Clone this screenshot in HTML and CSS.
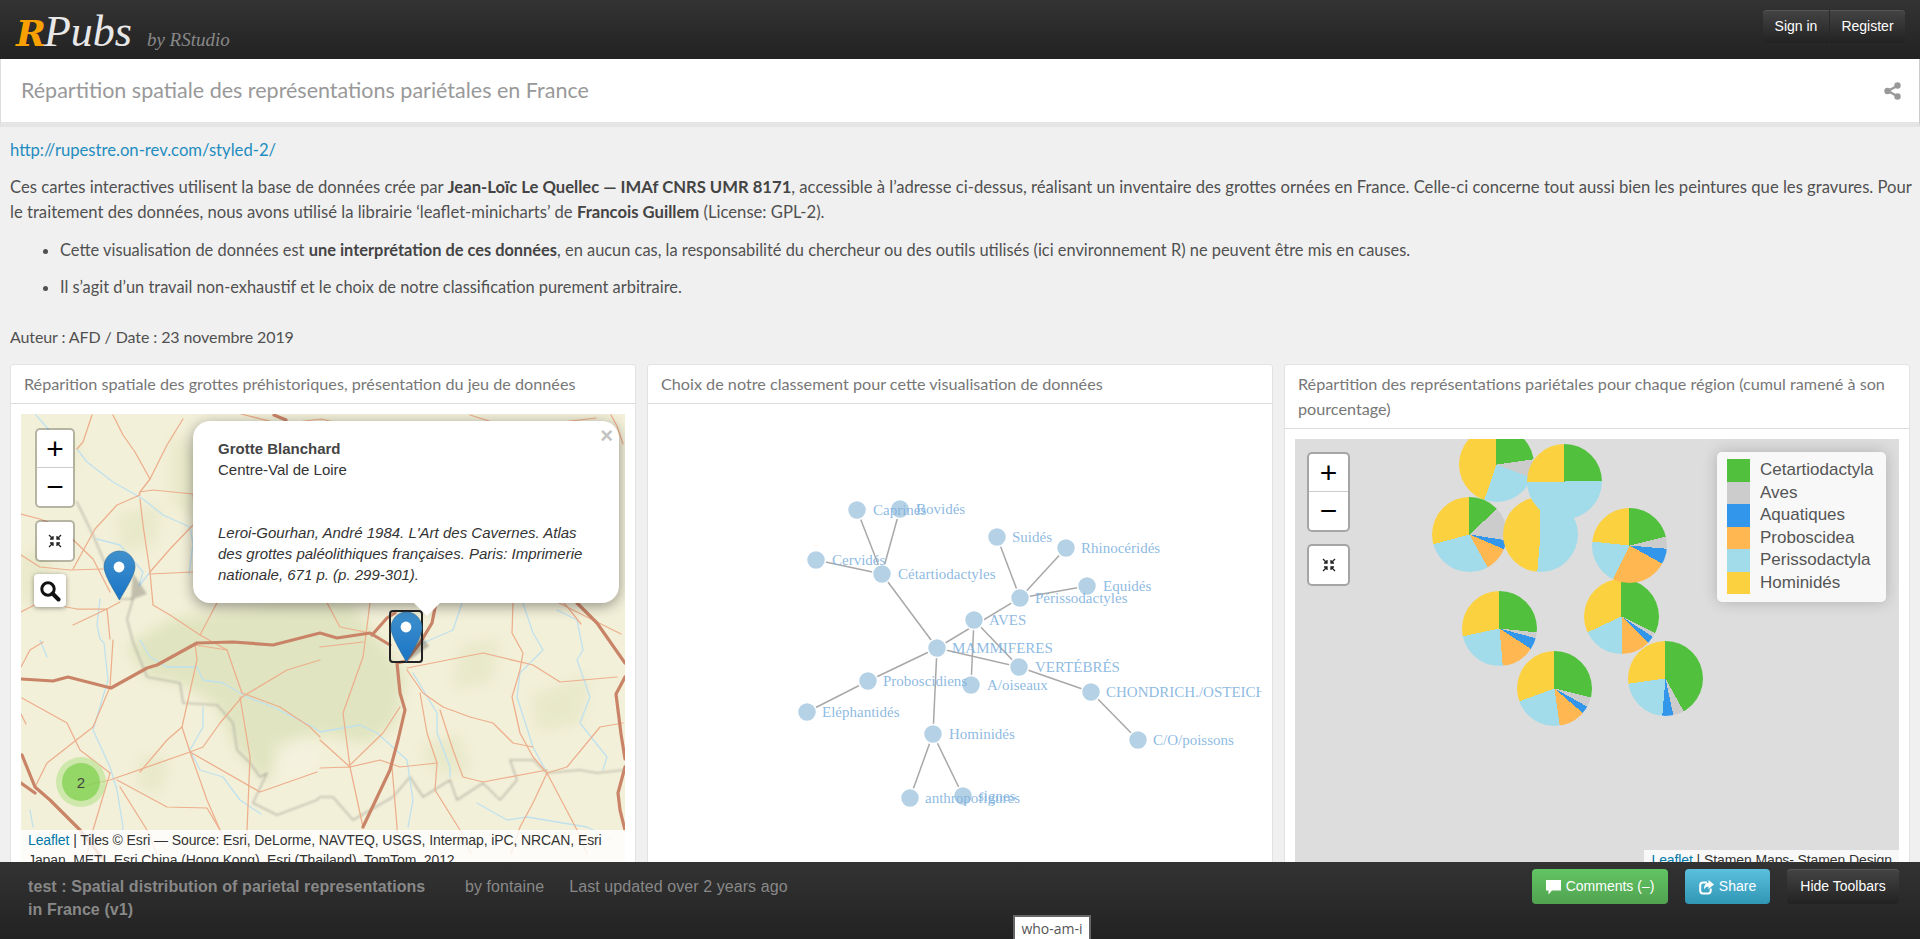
FILE: index.html
```html
<!DOCTYPE html>
<html lang="fr">

<head>
  <meta charset="UTF-8" />
  <title>RPubs - Répartition spatiale des représentations pariétales en France</title>
  <link rel="stylesheet" href="styles.css">
</head>

<body>
  <div class="topbar">
    <div class="logo"><span class="logo-r">R</span><span class="logo-pubs">Pubs</span><span class="logo-by">by RStudio</span></div>
    <div class="btn-group">
      <a class="btn btn-dark">Sign in</a>
      <a class="btn btn-dark">Register</a>
    </div>
  </div>

  <div class="titlebar">
    <h1>Répartition spatiale des représentations pariétales en France</h1>
    <svg class="share-alt" width="17" height="18" viewBox="0 0 17 18">
      <path d="M13 4 L4 9 L13 14" fill="none" stroke="#999" stroke-width="2.4" />
      <circle cx="13.5" cy="3.5" r="3.2" fill="#999" />
      <circle cx="3.5" cy="9" r="3.2" fill="#999" />
      <circle cx="13.5" cy="14.5" r="3.2" fill="#999" />
    </svg>
  </div>

  <div class="content">
    <p><a href="#">http://rupestre.on-rev.com/styled-2/</a></p>
    <p>Ces cartes interactives utilisent la base de données crée par <strong>Jean-Loïc Le Quellec — IMAf CNRS UMR 8171</strong>, accessible à l’adresse ci-dessus, réalisant un inventaire des grottes ornées en France. Celle-ci concerne tout aussi bien les peintures que les gravures. Pour le traitement des données, nous avons utilisé la librairie ‘leaflet-minicharts’ de <strong>Francois Guillem</strong> (License: GPL-2).</p>
    <ul>
      <li>Cette visualisation de données est <strong>une interprétation de ces données</strong>, en aucun cas, la responsabilité du chercheur ou des outils utilisés (ici environnement R) ne peuvent être mis en causes.</li>
      <li>Il s’agit d’un travail non-exhaustif et le choix de notre classification purement arbitraire.</li>
    </ul>
    <p class="auteur">Auteur : AFD / Date : 23 novembre 2019</p>

    <div class="cards">
      <div class="card">
        <div class="card-title">Réparition spatiale des grottes préhistoriques, présentation du jeu de données</div>
        <div class="card-body">
          <div class="map">
            <svg class="tiles" viewBox="0 0 604 456" preserveAspectRatio="xMinYMin slice">
              <defs>
                <filter id="soft"><feGaussianBlur stdDeviation="7" /></filter>
                <filter id="soft2"><feGaussianBlur stdDeviation="1" /></filter>
                <linearGradient id="pin" x1="0" y1="0" x2="0" y2="1">
                  <stop offset="0" stop-color="#3f90cc" />
                  <stop offset="1" stop-color="#1a74c6" />
                </linearGradient>
              </defs>
              <rect width="604" height="456" fill="#f3f0d9" />
              <g fill="#e0e4c0" filter="url(#soft)">
                <path d="M105 232 L150 205 L250 190 L330 190 L385 260 L375 310 L345 330 L300 320 L262 335 L245 370 L216 336 L196 291 L159 269 L126 263 Z" />
              </g>
              <g fill="#e4e6c4" fill-opacity=".7" filter="url(#soft)">
                <path d="M30 20 L60 30 L50 60 L25 50 Z" />
                <path d="M95 100 L140 90 L135 130 L100 140 Z" />
                <path d="M150 20 L190 40 L180 110 L150 90 Z" />
                <path d="M440 230 L480 225 L470 270 L430 275 Z" />
                <path d="M510 280 L570 260 L560 310 L515 320 Z" />
                <path d="M120 340 L150 345 L140 380 L115 375 Z" />
                <path d="M400 330 L440 320 L450 360 L410 360 Z" />
                <path d="M0 140 L30 130 L30 190 L0 190 Z" />
              </g>
              <g fill="#f6f3e4" fill-opacity=".5" filter="url(#soft)">
                <path d="M250 330 L290 320 L300 350 L260 370 Z" />
              </g>
              <g fill="none" stroke-linejoin="round" stroke-linecap="round">
                <g stroke="#a9a99c" stroke-width="1.7" opacity=".7" filter="url(#soft2)">
                  <path d="M56 88 L72 121 L99 185 L112 185 L106 205 L112 228 L126 263 L159 269 L162 289 L196 291 L212 309 L216 336 L229 349 L239 363 L246 359 L232 389 L256 401 L296 386 L299 383 L312 383 L332 406 L372 383 L389 363 L402 383 L429 366 L436 386 L462 369 L479 386 L496 366 L489 346 L512 346 L526 359 L559 356 L576 359 L602 356" />
                </g>
                <g stroke="#bfe1ee" stroke-width="1.3">
                  <path d="M56 35 L66 48 L92 68 L122 85 L142 101 L169 113 L172 130 L168 160" />
                  <path d="M76 125 L99 131 L122 158 L118 172 L129 158" />
                  <path d="M79 185 L76 211 L79 225 L83 229 L87 266 L72 316 L89 353 L96 376 L102 413 L98 430" />
                  <path d="M119 226 L129 243 L146 253 L176 253 L182 266 L202 269 L226 283 L252 293 L292 313 L299 318 L339 311 L356 319 L386 346 L392 386 L387 413" />
                  <path d="M182 293 L182 313 L169 336 L179 356 L202 363 L219 386 L240 400" />
                  <path d="M19 226 L26 243" />
                  <path d="M9 396 L12 413" />
                  <path d="M502 189 L512 219 L522 236 L499 259 L496 283 L512 333 L526 359" />
                  <path d="M536 196 L556 206 L562 236 L556 246 L569 283 L559 309 L586 343 L582 356" />
                  <path d="M441 189 L432 216 L402 229" />
                  <path d="M392 259 L416 299 L416 319 L429 353 L429 363" />
                  <path d="M456 389 L486 406 L506 403 L566 413 L590 425" />
                  <path d="M15 1 L40 30" />
                </g>
                <g stroke="#edae8c" stroke-width="1.25">
                  <path d="M71 1 L62 28 L56 35" />
                  <path d="M92 1 L102 21 L114 38 L129 65 L119 78 L118 81" />
                  <path d="M162 5 L146 31 L129 65" />
                  <path d="M119 78 L132 76 L172 80" />
                  <path d="M119 81 L96 91 L74 115 L52 155" />
                  <path d="M0 100 L19 105 L39 113 L72 145 L89 178" />
                  <path d="M119 85 L122 111 L129 158 L132 191 L149 201 L179 221 L206 236" />
                  <path d="M172 111 L149 135 L129 158" />
                  <path d="M129 160 L172 158" />
                  <path d="M0 141 L19 153 L49 156 L82 155" />
                  <path d="M0 198 L19 188 L56 195 L86 195 L99 188" />
                  <path d="M52 211 L86 195 L89 225" />
                  <path d="M386 254 L462 239 L512 251 L539 268 L596 263" />
                  <path d="M492 189 L491 219 L502 239 L499 256 L491 283 L499 319 L512 343 L526 359" />
                  <path d="M386 256 L402 279 L422 293 L449 303 L472 309 L492 329 L512 333" />
                  <path d="M399 279 L406 319 L416 349 L414 376 L439 416 L450 440" />
                  <path d="M419 296 L432 336 L442 363 L462 368 L526 356" />
                  <path d="M526 359 L556 416 L566 440" />
                  <path d="M526 359 L546 353 L579 313 L602 309" />
                  <path d="M299 326 L329 353 L359 346 L379 353 L416 349" />
                  <path d="M299 354 L329 353 L342 413" />
                  <path d="M329 353 L322 299 L342 243 L349 189" />
                  <path d="M329 351 L362 319 L379 293" />
                  <path d="M299 233 L342 228" />
                  <path d="M306 189 L319 213 L349 219" />
                  <path d="M371 353 L376 413 L376 440" />
                  <path d="M526 359 L512 389 L499 413 L490 440" />
                  <path d="M1 284 L46 309 L59 336 L89 359" />
                  <path d="M92 226 L89 273 L72 313 L26 349 L14 373" />
                  <path d="M0 253 L9 236 L22 228" />
                  <path d="M57 373 L89 366 L169 338 L182 333 L199 309 L221 283 L266 256 L299 246" />
                  <path d="M119 358 L146 326 L161 313 L176 246 L174 229" />
                  <path d="M161 313 L169 338 L186 386 L199 416 L210 440" />
                  <path d="M169 338 L239 378 L296 358" />
                  <path d="M219 283 L229 343 L226 416 L228 440" />
                  <path d="M174 231 L206 236 L221 279 L259 293 L289 313 L299 323" />
                  <path d="M89 359 L72 416 L66 440" />
                  <path d="M96 366 L146 393 L186 394 L199 416" />
                  <path d="M99 373 L126 416 L136 440" />
                  <path d="M172 80 L176 130" />
                  <path d="M179 221 L206 170 L230 120" />
                  <path d="M440 40 L450 100" />
                  <path d="M530 185 L600 220" />
                  <path d="M540 185 L560 210" />
                  <path d="M0 300 L5 310" />
                  <path d="M220 0 L260 10 L300 5 L345 15" />
                  <path d="M449 1 L490 14 L575 4" />
                  <path d="M590 1 L596 12 L602 30" />
                </g>
                <g stroke="#c98468" stroke-width="3.2">
                  <path d="M0 265 L32 267 L47 263 L86 273 L90 274 L126 254 L136 251 L176 229 L212 228 L252 231 L299 219 L316 224 L349 219 L369 231" />
                  <path d="M415 189 L411 209 L399 229 L385 247 L376 249 L379 279 L384 296 L377 326 L369 356 L342 413" />
                  <path d="M351 221 L366 204 L374 199" />
                  <path d="M556 189 L576 209 L604 249" />
                  <path d="M604 263 L595 280 L600 320 L604 345" />
                  <path d="M604 353 L597 379 L599 396 L604 416" />
                  <path d="M1 341 L14 373 L29 386 L59 416 L82 445" />
                  <path d="M0 369 L14 379" />
                  <path d="M253 1 L265 6" />
                </g>
              </g>
              <circle cx="60" cy="368" r="25" fill="#b5e28c" fill-opacity=".6" />
              <circle cx="60" cy="368" r="19" fill="#6ecc39" fill-opacity=".6" />
              <text class="cluster-n" x="60" y="374">2</text>
              <path d="M112 159 L110 186 L126 180 Z" fill="#000" opacity=".2" filter="url(#soft2)" />
              <path d="M98.5 137 C89 137 83 145 83 153 C83 161 94 178 98.5 186 C103 178 114 161 114 153 C114 145 108 137 98.5 137 Z" fill="url(#pin)" stroke="#2e6c97" stroke-width=".6" />
              <circle cx="98" cy="153" r="5.4" fill="#fff" />
              <path d="M395 215 L387 247 L408 232 Z" fill="#000" opacity=".25" filter="url(#soft2)" />
              <rect x="369" y="197" width="32" height="51" rx="3" fill="none" stroke="#222" stroke-width="2" />
              <path d="M385.5 198 C376 198 370 206 370 214 C370 222 381 240 385.5 248 C390 240 401 222 401 214 C401 206 395 198 385.5 198 Z" fill="url(#pin)" stroke="#2e6c97" stroke-width=".6" />
              <circle cx="385" cy="213" r="5.4" fill="#fff" />
            </svg>

            <div class="zoom-ctl zoom-ctl-a">
              <a class="zoom-btn">+</a>
              <a class="zoom-btn">−</a>
            </div>
            <a class="reset-ctl reset-ctl-a">
              <svg width="14" height="14" viewBox="0 0 14 14"><path d="M1 1 L5 5 M5 2 L5 5 L2 5 M13 1 L9 5 M9 2 L9 5 L12 5 M1 13 L5 9 M5 12 L5 9 L2 9 M13 13 L9 9 M9 12 L9 9 L12 9" fill="none" stroke="#222" stroke-width="1.3" /></svg>
            </a>
            <a class="search-ctl">
              <svg width="22" height="22" viewBox="0 0 22 22"><circle cx="9" cy="9" r="6.2" fill="none" stroke="#111" stroke-width="3" /><path d="M13.5 13.5 L19.5 19.5" stroke="#111" stroke-width="4" stroke-linecap="round" /></svg>
            </a>

            <div class="popup">
              <span class="popup-close">×</span>
              <strong>Grotte Blanchard</strong><br>
              Centre-Val de Loire
              <p class="popup-ref">Leroi-Gourhan, André 1984. L'Art des Cavernes. Atlas des grottes paléolithiques françaises. Paris: Imprimerie nationale, 671 p. (p. 299-301).</p>
              <span class="popup-tip"></span>
            </div>
            <div class="attribution"><a href="#">Leaflet</a> | Tiles © Esri — Source: Esri, DeLorme, NAVTEQ, USGS, Intermap, iPC, NRCAN, Esri Japan, METI, Esri China (Hong Kong), Esri (Thailand), TomTom, 2012</div>
          </div>
        </div>
      </div>

      <div class="card">
        <div class="card-title">Choix de notre classement pour cette visualisation de données</div>
        <div class="card-body">
          <svg class="graph" viewBox="0 0 604 456">
            <g class="edges">
              <path d="M279 234 L224 160" />
              <path d="M279 234 L362 184" />
              <path d="M279 234 L361 253" />
              <path d="M279 234 L210 267" />
              <path d="M279 234 L275 320" />
              <path d="M224 160 L199 96" />
              <path d="M224 160 L242 95" />
              <path d="M224 160 L158 146" />
              <path d="M362 184 L339 123" />
              <path d="M362 184 L408 134" />
              <path d="M362 184 L429 172" />
              <path d="M316 206 L361 253" />
              <path d="M316 206 L313 271" />
              <path d="M210 267 L149 298" />
              <path d="M361 253 L433 278" />
              <path d="M433 278 L480 326" />
              <path d="M275 320 L252 384" />
              <path d="M275 320 L305 382" />
            </g>
            <g class="nodes">
              <circle cx="199" cy="96" r="9.5" />
              <circle cx="242" cy="95" r="9.5" />
              <circle cx="158" cy="146" r="9.5" />
              <circle cx="224" cy="160" r="9.5" />
              <circle cx="339" cy="123" r="9.5" />
              <circle cx="408" cy="134" r="9.5" />
              <circle cx="429" cy="172" r="9.5" />
              <circle cx="362" cy="184" r="9.5" />
              <circle cx="316" cy="206" r="9.5" />
              <circle cx="279" cy="234" r="9.5" />
              <circle cx="361" cy="253" r="9.5" />
              <circle cx="210" cy="267" r="9.5" />
              <circle cx="313" cy="271" r="9.5" />
              <circle cx="433" cy="278" r="9.5" />
              <circle cx="149" cy="298" r="9.5" />
              <circle cx="275" cy="320" r="9.5" />
              <circle cx="480" cy="326" r="9.5" />
              <circle cx="252" cy="384" r="9.5" />
              <circle cx="305" cy="382" r="9.5" />
            </g>
            <g class="labels">
              <text x="215" y="101">Caprinés</text>
              <text x="258" y="100">Bovidés</text>
              <text x="174" y="151">Cervidés</text>
              <text x="240" y="165">Cétartiodactyles</text>
              <text x="354" y="128">Suidés</text>
              <text x="423" y="139">Rhinocéridés</text>
              <text x="445" y="177">Equidés</text>
              <text x="377" y="189">Périssodactyles</text>
              <text x="331" y="211">AVES</text>
              <text x="294" y="239">MAMMIFERES</text>
              <text x="377" y="258">VERTÉBRÉS</text>
              <text x="225" y="272">Proboscidiens</text>
              <text x="329" y="276">A/oiseaux</text>
              <text x="448" y="283">CHONDRICH./OSTEICHTYENS</text>
              <text x="164" y="303">Eléphantidés</text>
              <text x="291" y="325">Hominidés</text>
              <text x="495" y="331">C/O/poissons</text>
              <text x="267" y="389">anthropofigures</text>
              <text x="320" y="387">signes</text>
            </g>
          </svg>
        </div>
      </div>

      <div class="card">
        <div class="card-title">Répartition des représentations pariétales pour chaque région (cumul ramené à son pourcentage)</div>
        <div class="card-body">
          <div class="map map-grey">
            <div class="pie" style="left:163.5px;top:-12.5px;background:conic-gradient(#51c13d 0 82deg,#ccc 0 111deg,#a2dbea 0 199deg,#fbd13f 0)"></div>
            <div class="pie" style="left:136.5px;top:57.5px;background:conic-gradient(#51c13d 0 47deg,#ccc 0 99deg,#3296eb 0 113deg,#ffb752 0 151deg,#a2dbea 0 255deg,#fbd13f 0)"></div>
            <div class="pie" style="left:207.5px;top:57.5px;background:conic-gradient(#a2dbea 0 185deg,#fbd13f 0)"></div>
            <div class="pie" style="left:231.5px;top:4.5px;background:conic-gradient(#51c13d 0 90deg,#a2dbea 0 270deg,#fbd13f 0)"></div>
            <div class="pie" style="left:288.5px;top:139.5px;background:conic-gradient(#51c13d 0 116deg,#ccc 0 123deg,#3296eb 0 134deg,#ffb752 0 180deg,#a2dbea 0 245deg,#fbd13f 0)"></div>
            <div class="pie" style="left:296.5px;top:68.5px;background:conic-gradient(#51c13d 0 76deg,#ccc 0 95deg,#3296eb 0 119deg,#ffb752 0 206deg,#a2dbea 0 276deg,#fbd13f 0)"></div>
            <div class="pie" style="left:166.5px;top:151.5px;background:conic-gradient(#51c13d 0 96deg,#ccc 0 105deg,#3296eb 0 123deg,#ffb752 0 175deg,#a2dbea 0 258deg,#fbd13f 0)"></div>
            <div class="pie" style="left:221.5px;top:211.5px;background:conic-gradient(#51c13d 0 104deg,#ccc 0 119deg,#3296eb 0 131deg,#ffb752 0 172deg,#a2dbea 0 250deg,#fbd13f 0)"></div>
            <div class="pie" style="left:332.5px;top:201.5px;background:conic-gradient(#51c13d 0 151deg,#ccc 0 168deg,#3296eb 0 185deg,#a2dbea 0 262deg,#fbd13f 0)"></div>

            <div class="zoom-ctl zoom-ctl-b">
              <a class="zoom-btn">+</a>
              <a class="zoom-btn">−</a>
            </div>
            <a class="reset-ctl reset-ctl-b">
              <svg width="14" height="14" viewBox="0 0 14 14"><path d="M1 1 L5 5 M5 2 L5 5 L2 5 M13 1 L9 5 M9 2 L9 5 L12 5 M1 13 L5 9 M5 12 L5 9 L2 9 M13 13 L9 9 M9 12 L9 9 L12 9" fill="none" stroke="#222" stroke-width="1.3" /></svg>
            </a>

            <div class="legend">
              <i class="sw sw-green"></i><span>Cetartiodactyla</span>
              <i class="sw sw-grey"></i><span>Aves</span>
              <i class="sw sw-blue"></i><span>Aquatiques</span>
              <i class="sw sw-orange"></i><span>Proboscidea</span>
              <i class="sw sw-sky"></i><span>Perissodactyla</span>
              <i class="sw sw-yellow"></i><span>Hominidés</span>
            </div>
            <div class="attribution attribution-short"><a href="#">Leaflet</a> | Stamen Maps- Stamen Design</div>
          </div>
        </div>
      </div>
    </div>
  </div>

  <div class="footerbar">
    <div class="doc-title">test : Spatial distribution of parietal representations in France (v1)</div>
    <div class="doc-meta">by fontaine</div>
    <div class="doc-meta">Last updated over 2 years ago</div>
    <div class="footer-btns">
      <a class="btn btn-green">
        <svg width="15" height="16" viewBox="0 0 15 16"><path d="M0 1 H15 V11.5 H6 L2.5 15.5 V11.5 H0 Z" fill="#fff" /></svg>
        Comments (–)
      </a>
      <a class="btn btn-blue">
        <svg width="15" height="16" viewBox="0 0 15 16"><path d="M8 3.5 H4 Q1.2 3.5 1.2 6.2 V11.8 Q1.2 14.5 4 14.5 H9 Q11.7 14.5 11.7 11.8 V9.5" fill="none" stroke="#fff" stroke-width="2" /><path d="M9.5 1 L15 5.5 L9.5 10 V7.5 Q6.5 7.5 5 10.5 Q5 4 9.5 3.5 Z" fill="#fff" /></svg>
        Share
      </a>
      <a class="btn btn-dark btn-hide">Hide Toolbars</a>
    </div>
  </div>
  <div class="whoami">who-am-i</div>
</body>

</html>
```

FILE: styles.css
```css
* {
  box-sizing: border-box;
}

html,
body {
  height: 100%;
}

body {
  margin: 0;
  overflow: hidden;
  background-color: #f0f0f0;
  font-family: Lato, sans-serif;
  font-size: 16.65px;
  line-height: 25px;
  color: #505050;
}

a {
  color: #1f8dbf;
  text-decoration: none;
}

/* top bar */
.topbar {
  height: 59px;
  display: flex;
  justify-content: space-between;
  align-items: flex-start;
  padding: 10px 15px 0 16px;
  background: linear-gradient(#333, #222);
}

.logo {
  display: flex;
  align-items: baseline;
  height: 49px;
  line-height: 44px;
}

.logo-r {
  font-family: "DejaVu Serif", serif;
  font-style: italic;
  font-weight: bold;
  font-size: 36px;
  color: #f9a100;
}

.logo-pubs {
  font-family: "Liberation Serif", serif;
  font-style: italic;
  font-size: 44px;
  color: #e8e8e8;
  margin-left: -2px;
}

.logo-by {
  font-family: "Liberation Serif", serif;
  font-style: italic;
  font-size: 19px;
  color: #888;
  margin-left: 15px;
}

.btn {
  display: flex;
  align-items: center;
  justify-content: center;
  gap: 5px;
  height: 35px;
  font-family: "Liberation Sans", sans-serif;
  font-size: 14px;
  color: #fff;
  border-radius: 4px;
}

.btn-dark {
  background: linear-gradient(#444, #222);
  box-shadow: inset 0 1px 0 #555;
}

.btn-group {
  display: flex;
}

.btn-group .btn {
  height: 33px;
}

.btn-group .btn:first-child {
  width: 67px;
  border-radius: 4px 0 0 4px;
  border-right: 1px solid #2a2a2a;
}

.btn-group .btn:last-child {
  width: 75px;
  border-radius: 0 4px 4px 0;
}

/* title bar */
.titlebar {
  height: 68px;
  display: flex;
  justify-content: space-between;
  align-items: center;
  padding: 0 18px 0 20px;
  background-color: #fff;
  border-bottom: 5px solid #e5e5e5;
  border-right: 1px solid #ccc;
  border-left: 1px solid #ddd;
}

h1 {
  margin: 0;
  font-size: 21.5px;
  font-weight: 400;
  color: #999;
}

/* text block */
.content {
  padding: 11px 4px 0 10px;
}

.content p {
  margin: 0 0 12px;
}

.content ul {
  margin: 0 0 25px;
  padding-left: 50px;
  font-size: 16.4px;
}

.content li {
  margin-bottom: 12px;
}

.content strong {
  color: #444;
}

.content .auteur {
  margin-bottom: 15px;
  font-size: 16px;
  letter-spacing: -0.1px;
}

/* cards */
.cards {
  display: grid;
  grid-template-columns: repeat(3, 626px);
  gap: 11px;
  height: 517px;
}

.card {
  display: flex;
  flex-direction: column;
  background-color: #fff;
  border: 1px solid #e2e2e2;
  border-radius: 3px;
  min-width: 0;
}

.card-title {
  padding: 6px 13px 7px;
  border-bottom: 1px solid #ddd;
  font-size: 16.2px;
  color: #777;
}

.card-body {
  flex: 1;
  padding: 10px;
  min-height: 0;
}

.map {
  position: relative;
  height: 100%;
  overflow: hidden;
  font-family: "Liberation Sans", sans-serif;
}

.map-grey {
  background-color: #ddd;
}

.tiles {
  display: block;
  width: 100%;
  height: 100%;
}

.cluster-n {
  font-family: "Liberation Sans", sans-serif;
  font-size: 15px;
  text-anchor: middle;
  fill: #444;
}

/* map controls */
.zoom-ctl,
.reset-ctl {
  position: absolute;
  display: block;
  background-color: #fff;
  border: 2px solid rgba(0, 0, 0, 0.25);
  border-radius: 5px;
  background-clip: padding-box;
}

.zoom-ctl-a,
.reset-ctl-a {
  left: 14px;
  width: 40px;
}

.zoom-ctl-b,
.reset-ctl-b {
  left: 12px;
  width: 43px;
}

.zoom-ctl-a {
  top: 14px;
}

.zoom-ctl-b {
  top: 13px;
}

.reset-ctl {
  display: flex;
  align-items: center;
  justify-content: center;
  height: 42px;
}

.reset-ctl-a {
  top: 106px;
}

.reset-ctl-b {
  top: 105px;
}

.zoom-btn {
  display: block;
  height: 38px;
  font-size: 30px;
  line-height: 37px;
  text-align: center;
  color: #000;
}

.zoom-btn:first-child {
  border-bottom: 1px solid #ccc;
}

.search-ctl {
  position: absolute;
  left: 13px;
  top: 160px;
  width: 32px;
  height: 33px;
  display: flex;
  align-items: center;
  justify-content: center;
  background-color: #fff;
  border-radius: 4px;
  box-shadow: 0 1px 5px rgba(0, 0, 0, 0.4);
}

/* popup */
.popup {
  position: absolute;
  left: 172px;
  top: 7px;
  width: 426px;
  height: 182px;
  padding: 17px 25px 0;
  background-color: #fff;
  border-radius: 17px;
  box-shadow: 0 3px 14px rgba(0, 0, 0, 0.4);
  font-size: 15px;
  line-height: 21px;
  color: #333;
}

.popup-close {
  position: absolute;
  right: 6px;
  top: 4px;
  font-size: 22px;
  font-weight: bold;
  line-height: 22px;
  color: #c3c3c3;
}

.content .popup-ref {
  margin: 42px 0 0;
  font-style: italic;
}

.popup-tip {
  position: absolute;
  left: 220px;
  top: 100%;
  margin-top: -1px;
  width: 0;
  height: 0;
  border-left: 14px solid transparent;
  border-right: 14px solid transparent;
  border-top: 14px solid #fff;
}

.attribution {
  position: absolute;
  left: 0;
  right: 0;
  bottom: 0;
  padding: 0 7px;
  background-color: rgba(255, 255, 255, 0.8);
  font-size: 14px;
  line-height: 20px;
  letter-spacing: -0.1px;
  color: #333;
}

.attribution a {
  color: #0078a8;
}

.attribution-short {
  left: auto;
}

/* graph */
.graph {
  display: block;
  width: 604px;
  height: 456px;
}

.edges path {
  stroke: #a8a8a8;
  stroke-width: 1.5;
  fill: none;
}

.nodes circle {
  fill: #b5d1e6;
  stroke: #fff;
  stroke-width: 1.5;
}

.labels text {
  font-family: "Liberation Serif", serif;
  font-size: 15px;
  fill: #7fb2de;
  fill-opacity: 0.9;
}

/* minicharts */
.pie {
  position: absolute;
  width: 75px;
  height: 75px;
  border-radius: 50%;
}

.legend {
  position: absolute;
  left: 422px;
  top: 13px;
  width: 169px;
  height: 150px;
  padding: 7px 10px;
  display: grid;
  grid-template-columns: 23px 1fr;
  grid-auto-rows: 22.5px;
  column-gap: 10px;
  background-color: rgba(255, 255, 255, 0.8);
  border-radius: 5px;
  box-shadow: 0 0 15px rgba(0, 0, 0, 0.2);
  font-size: 17px;
  line-height: 22.5px;
  color: #555;
}

.sw-green { background-color: #51c13d; }
.sw-grey { background-color: #ccc; }
.sw-blue { background-color: #3296eb; }
.sw-orange { background-color: #ffb752; }
.sw-sky { background-color: #a2dbea; }
.sw-yellow { background-color: #fbd13f; }

/* bottom bar */
.footerbar {
  position: fixed;
  left: 0;
  right: 0;
  bottom: 0;
  height: 77px;
  display: flex;
  align-items: flex-start;
  padding: 13px 21px 0 28px;
  background: linear-gradient(#333, #222);
  font-family: "Liberation Sans", sans-serif;
  font-size: 16px;
  line-height: 23px;
  letter-spacing: 0.08px;
  color: #888;
}

.doc-title {
  width: 410px;
  margin-right: 27px;
  font-weight: bold;
}

.doc-meta {
  margin-right: 25px;
}

.footer-btns {
  display: flex;
  gap: 17px;
  margin-left: auto;
  margin-top: -6px;
  letter-spacing: 0;
}

.btn-green {
  width: 136px;
  background: linear-gradient(#62c462, #51a351);
}

.btn-blue {
  width: 85px;
  background: linear-gradient(#5bc0de, #2f96b4);
}

.btn-hide {
  width: 112px;
}

.whoami {
  position: fixed;
  left: 1013px;
  bottom: 0;
  width: 78px;
  height: 24px;
  text-align: center;
  background-color: #fff;
  border: 2px solid #666;
  border-bottom: 0;
  font-family: "Open Sans", sans-serif;
  font-size: 14px;
  line-height: 23px;
  letter-spacing: 0;
  color: #555;
}
```
